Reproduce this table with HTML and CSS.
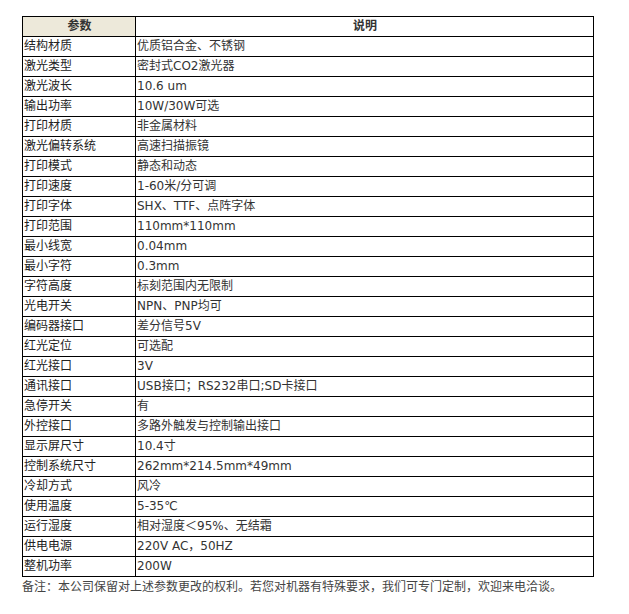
FILE: index.html
```html
<!DOCTYPE html>
<html lang="zh-CN">
<head>
<meta charset="utf-8">
<title>参数</title>
<link rel="stylesheet" href="styles.css">
</head>
<body>
<div class="wrap">
<table class="spec">
<thead>
<tr><th class="k">参数</th><th class="v">说明</th></tr>
</thead>
<tbody>
<tr><td>结构材质</td><td>优质铝合金、不锈钢</td></tr>
<tr><td>激光类型</td><td>密封式CO2激光器</td></tr>
<tr><td>激光波长</td><td>10.6 um</td></tr>
<tr><td>输出功率</td><td>10W/30W可选</td></tr>
<tr><td>打印材质</td><td>非金属材料</td></tr>
<tr><td>激光偏转系统</td><td>高速扫描振镜</td></tr>
<tr><td>打印模式</td><td>静态和动态</td></tr>
<tr><td>打印速度</td><td>1-60米/分可调</td></tr>
<tr><td>打印字体</td><td>SHX、TTF、点阵字体</td></tr>
<tr><td>打印范围</td><td>110mm*110mm</td></tr>
<tr><td>最小线宽</td><td>0.04mm</td></tr>
<tr><td>最小字符</td><td>0.3mm</td></tr>
<tr><td>字符高度</td><td>标刻范围内无限制</td></tr>
<tr><td>光电开关</td><td>NPN、PNP均可</td></tr>
<tr><td>编码器接口</td><td>差分信号5V</td></tr>
<tr><td>红光定位</td><td>可选配</td></tr>
<tr><td>红光接口</td><td>3V</td></tr>
<tr><td>通讯接口</td><td>USB接口；RS232串口;SD卡接口</td></tr>
<tr><td>急停开关</td><td>有</td></tr>
<tr><td>外控接口</td><td>多路外触发与控制输出接口</td></tr>
<tr><td>显示屏尺寸</td><td>10.4寸</td></tr>
<tr><td>控制系统尺寸</td><td>262mm*214.5mm*49mm</td></tr>
<tr><td>冷却方式</td><td>风冷</td></tr>
<tr><td>使用温度</td><td>5-35℃</td></tr>
<tr><td>运行湿度</td><td>相对湿度＜95%、无结霜</td></tr>
<tr><td>供电电源</td><td>220V AC，50HZ</td></tr>
<tr><td>整机功率</td><td>200W</td></tr>
</tbody>
</table>
<p class="note">备注：本公司保留对上述参数更改的权利。若您对机器有特殊要求，我们可专门定制，欢迎来电洽谈。</p>
</div>
</body>
</html>
```
FILE: styles.css
```css
html, body {
  margin: 0;
  padding: 0;
  background: #fff;
}
body {
  font-family: "DejaVu Sans", "Noto Sans CJK SC", sans-serif;
  font-size: 12px;
  color: #333;
}
.wrap {
  padding: 16px 0 0 22px;
}
.spec {
  border-collapse: collapse;
  width: 572px;
  table-layout: fixed;
}
.spec th,
.spec td {
  border: 1px solid #000;
  height: 19px;
  padding: 0 0 0 1px;
  line-height: 19px;
  white-space: nowrap;
  vertical-align: middle;
  text-align: left;
}
.spec th {
  font-weight: bold;
  text-align: center;
  color: #333;
}
.spec th.k {
  width: 111px;
  background: #ede9da;
}
.spec th.v {
  background: #fff;
}
.spec td:first-child {
  color: #222;
}
.note {
  margin: 0;
  padding-top: 1px;
  line-height: 18px;
  color: #444;
}
```
